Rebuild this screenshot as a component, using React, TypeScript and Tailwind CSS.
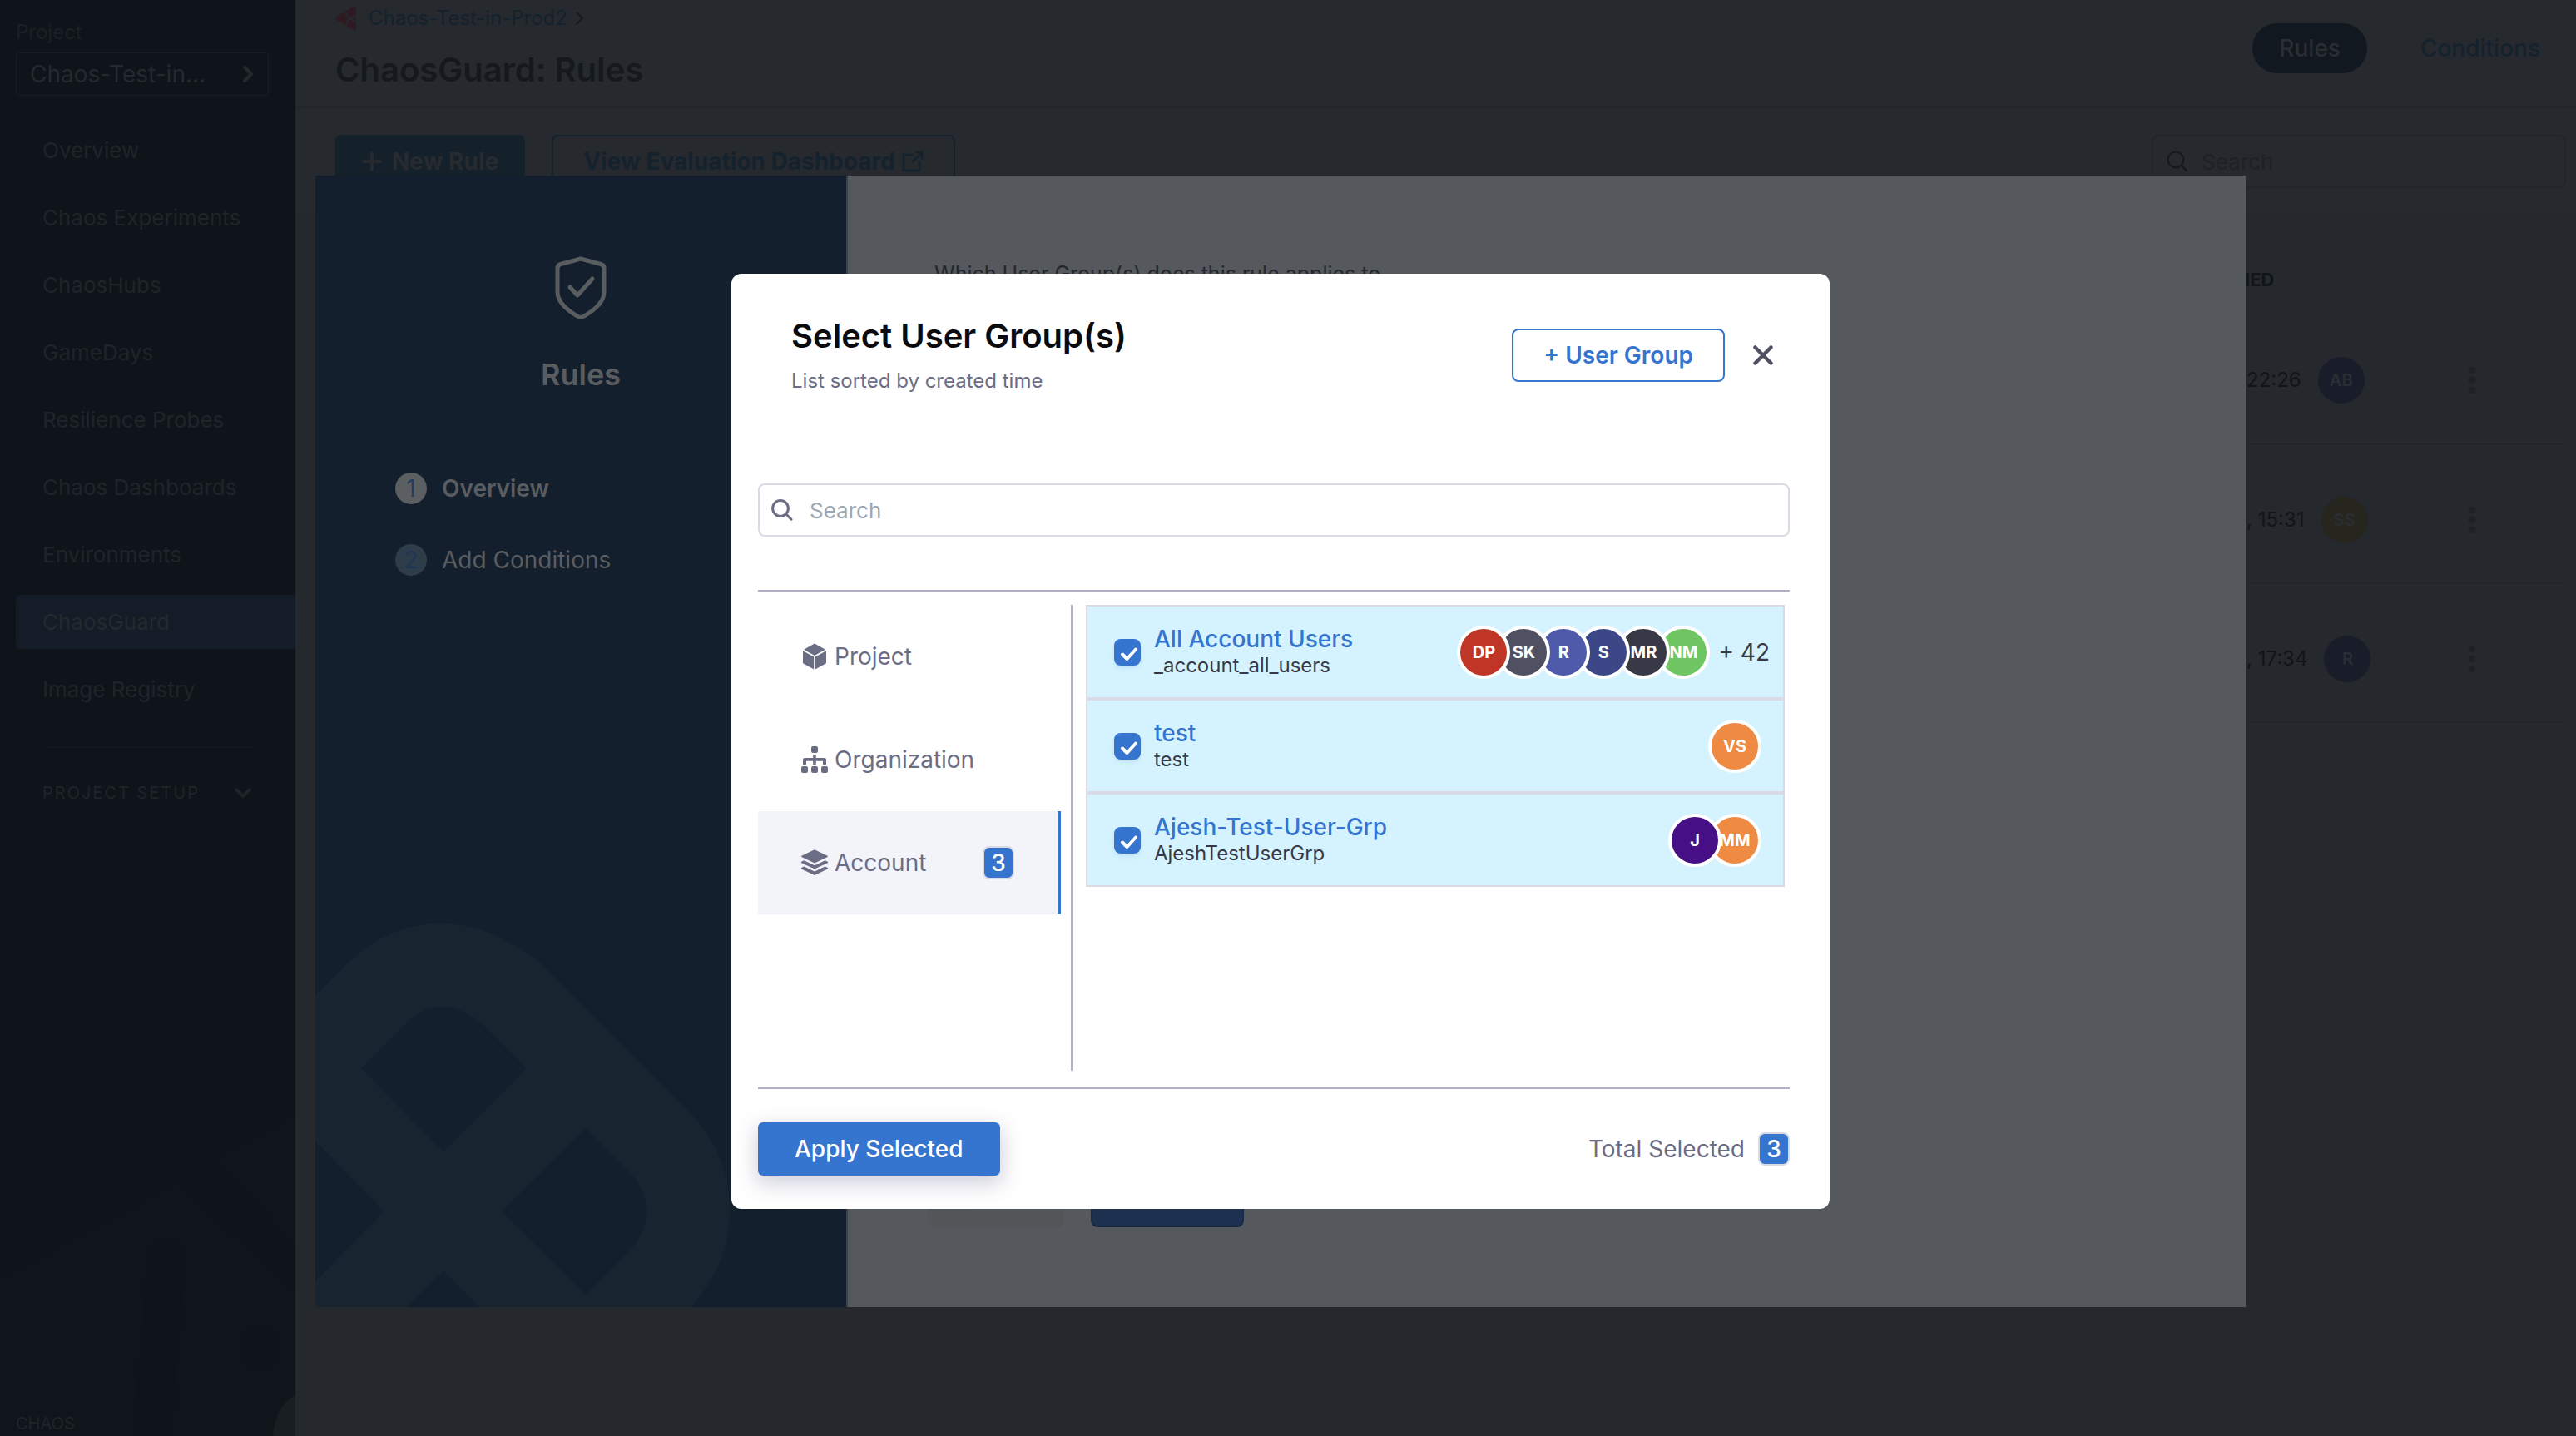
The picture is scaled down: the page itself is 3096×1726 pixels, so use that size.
import type { ReactNode } from "react";

const navItems = [
  "Overview",
  "Chaos Experiments",
  "ChaosHubs",
  "GameDays",
  "Resilience Probes",
  "Chaos Dashboards",
  "Environments",
  "ChaosGuard",
  "Image Registry",
];

const ruleRows = [
  { time: "22:26", initials: "AB", tone: "bg-[#191d2a]" },
  { time: ", 15:31", initials: "SS", tone: "bg-[#26261e]" },
  { time: ", 17:34", initials: "R", tone: "bg-[#191d2a]" },
];

type Member = { initials: string; tone: string };

const groups: { name: string; id: string; members: Member[]; more?: string }[] = [
  {
    name: "All Account Users",
    id: "_account_all_users",
    members: [
      { initials: "DP", tone: "bg-[#bf3627]" },
      { initials: "SK", tone: "bg-[#4f5162]" },
      { initials: "R", tone: "bg-[#4f5baa]" },
      { initials: "S", tone: "bg-[#3c4788]" },
      { initials: "MR", tone: "bg-[#383946]" },
      { initials: "NM", tone: "bg-[#70c563]" },
    ],
    more: "+ 42",
  },
  { name: "test", id: "test", members: [{ initials: "VS", tone: "bg-[#ee8a41]" }] },
  {
    name: "Ajesh-Test-User-Grp",
    id: "AjeshTestUserGrp",
    members: [
      { initials: "J", tone: "bg-[#470f85]" },
      { initials: "MM", tone: "bg-[#ee8a41]" },
    ],
  },
];

function CubeIcon() {
  return (
    <svg viewBox="0 0 32 32" className="size-8 shrink-0" fill="currentColor" aria-hidden="true">
      <path d="M16 0.5 29 7.8 16 15 3 7.8Z" />
      <path d="M2 9.3 15.2 16.6V31.5L2 24.2Z" />
      <path d="M30 9.3 16.8 16.6V31.5L30 24.2Z" />
    </svg>
  );
}

function SitemapIcon() {
  return (
    <svg viewBox="0 0 32 32" className="size-8 shrink-0" fill="currentColor" aria-hidden="true">
      <rect x="12" y="0" width="8" height="8" rx="2" />
      <rect x="0" y="24" width="8" height="8" rx="2" />
      <rect x="12" y="24" width="8" height="8" rx="2" />
      <rect x="24" y="24" width="8" height="8" rx="2" />
      <path d="M14.2 10h3.6v4H28a2 2 0 0 1 2 2v6h-4v-4.2h-8.2V22h-3.6v-4.2H6V22H2v-6a2 2 0 0 1 2-2h10.2Z" />
    </svg>
  );
}

function LayersIcon() {
  return (
    <svg viewBox="0 0 32 32" className="size-8 shrink-0" fill="currentColor" aria-hidden="true">
      <path d="M14.9 0.8a2.6 2.6 0 0 1 2.2 0L31.2 7.4a1 1 0 0 1 0 1.9L17.1 15.9a2.6 2.6 0 0 1-2.2 0L0.8 9.3a1 1 0 0 1 0-1.9Z" />
      <path d="M0.8 14.4 3.4 13.2 14.9 18.7a2.6 2.6 0 0 0 2.2 0L28.6 13.2 31.2 14.4a1 1 0 0 1 0 2L17.1 23a2.6 2.6 0 0 1-2.2 0L0.8 16.4a1 1 0 0 1 0-2Z" />
      <path d="M0.8 21.8 3.4 20.6 14.9 26a2.6 2.6 0 0 0 2.2 0L28.6 20.6 31.2 21.8a1 1 0 0 1 0 2L17.1 30.6a2.6 2.6 0 0 1-2.2 0L0.8 23.8a1 1 0 0 1 0-2Z" />
    </svg>
  );
}

const scopes: { label: string; icon: ReactNode; count?: number }[] = [
  { label: "Project", icon: <CubeIcon /> },
  { label: "Organization", icon: <SitemapIcon /> },
  { label: "Account", icon: <LayersIcon />, count: 3 },
];

function SearchIcon({ className, strokeWidth }: { className: string; strokeWidth: number }) {
  return (
    <svg viewBox="0 0 26 26" className={className} fill="none" stroke="currentColor" strokeWidth={strokeWidth} strokeLinecap="round" aria-hidden="true">
      <circle cx="11" cy="11" r="9.4" />
      <path d="M17.8 17.8 24 24.2" />
    </svg>
  );
}

function Sidebar() {
  return (
    <aside className="relative flex w-[355px] shrink-0 flex-col overflow-hidden bg-[#0f141b] pl-[19px] text-[#1f2428]">
      <svg viewBox="0 0 355 400" className="absolute bottom-0 left-0 w-full" aria-hidden="true">
        <path d="M355 12 255 68 355 174Z" fill="#10151b" />
        <path d="M0 209 213 94 355 224V400H0Z" fill="#10151b" />
        <path d="M192 168q30-2 31 24l-18 208h-45l18-208q2-22 14-24Z" fill="#0f141a" />
        <circle cx="312" cy="295" r="24" fill="#0f141a" />
        <path d="M355 350Q330 366 328 400H355Z" fill="#191e22" />
      </svg>
      <div className="relative mt-[23px] text-2xl text-[#1b2024]">Project</div>
      <button type="button" className="relative mt-2 mr-8 flex h-[52px] items-center justify-between rounded-sm border border-[#191e23] pr-[17px] pl-4 text-[28px] text-[#25292d]">
        Chaos-Test-in...
        <svg viewBox="0 0 14 22" className="h-[22px] w-3.5" fill="none" stroke="currentColor" strokeWidth="4" strokeLinecap="round" strokeLinejoin="round" aria-hidden="true">
          <path d="m3 3 8 8-8 8" />
        </svg>
      </button>
      <nav className="relative mt-[33px] flex flex-col gap-4">
        {navItems.map((item) => (
          <a
            key={item}
            href="#"
            className={
              item === "ChaosGuard"
                ? "flex h-[65px] items-center rounded-l-md bg-[#141c27] pl-8 text-[26px] text-[#24292d]"
                : "flex h-[65px] items-center pl-8 text-[26px]"
            }
          >
            {item}
          </a>
        ))}
      </nav>
      <hr className="relative mt-9 mr-12 ml-8 border-t-2 border-[#12171b]" />
      <button type="button" className="relative mt-[38px] mr-[52px] ml-8 flex items-center justify-between text-xl leading-8 tracking-widest">
        PROJECT SETUP
        <svg viewBox="0 0 22 14" className="h-3.5 w-[22px]" fill="none" stroke="currentColor" strokeWidth="4" strokeLinecap="round" strokeLinejoin="round" aria-hidden="true">
          <path d="m3 3 8 8 8-8" />
        </svg>
      </button>
      <div className="relative mt-auto pb-[3px] text-xl leading-6">CHAOS</div>
    </aside>
  );
}

function RulesPage() {
  return (
    <main className="flex min-w-0 flex-1 flex-col bg-[#25282c]">
      <header className="flex h-[130px] items-start justify-between border-b-2 border-[#23262a] bg-[#26292d] pr-[11px] pl-12">
        <div>
          <div className="mt-1.5 flex h-8 items-center text-2xl text-[#14222e]">
            <svg viewBox="0 0 26 30" className="mr-3.5 h-[30px] w-[26px] text-[#301a22]" aria-hidden="true">
              <path d="M1 13.500 22 1q3-1.500 3 2v24q0 3.500-3 2L1 16.500q-1.500-1.500 0-3Z" fill="currentColor" />
              <path d="M12 7.500 16 14M14 22l2-8M26 12l-9 3M14 21l3-6M17 15l9 5" stroke="#26292d" strokeWidth="2" fill="none" />
            </svg>
            <a href="#">Chaos-Test-in-Prod2</a>
            <svg viewBox="0 0 10 16" className="ml-2.5 h-4 w-2.5" fill="none" stroke="#15191d" strokeWidth="2" aria-hidden="true">
              <path d="m1 1 7 7-7 7" />
            </svg>
          </div>
          <h1 className="mt-[22px] text-[40px] leading-[48px] font-semibold text-[#15181c]">ChaosGuard: Rules</h1>
        </div>
        <div className="mt-7 flex gap-8 text-[28px] font-medium">
          <button type="button" className="h-[60px] rounded-full bg-[#111820] px-8 text-[#2a2d31]">Rules</button>
          <button type="button" className="h-[60px] px-8 text-[#14222e]">Conditions</button>
        </div>
      </header>

      <div className="flex h-32 items-start justify-between bg-[#26292d] pt-8 pr-3 pl-12">
        <div className="flex gap-8 text-[28px] font-bold">
          <button type="button" className="flex h-16 items-center gap-3 rounded-lg bg-[#14202a] px-8 text-[#272b2f]">
            <svg viewBox="0 0 24 24" className="size-6" stroke="currentColor" strokeWidth="3.500" strokeLinecap="round" aria-hidden="true">
              <path d="M12 2v20M2 12h20" />
            </svg>
            New Rule
          </button>
          <button type="button" className="flex h-16 items-center gap-2 rounded-lg border-2 border-[#14222e] px-9 text-[#14222e]">
            View Evaluation Dashboard
            <svg viewBox="0 0 26 26" className="size-[26px]" fill="none" stroke="currentColor" strokeWidth="2.500" aria-hidden="true">
              <path d="M14 5H2v19h19V12M16 2h8v8M24 2 12 14" />
            </svg>
          </button>
        </div>
        <label className="flex h-16 w-[498px] items-center gap-4 rounded-lg border-2 border-[#232629] pl-4 text-[#14171b]">
          <SearchIcon className="size-[26px] shrink-0" strokeWidth={2} />
          <input type="text" aria-label="Search rules" placeholder="Search" className="h-full min-w-0 flex-1 bg-transparent text-[26px] outline-none placeholder:text-[#1e2125]" />
        </label>
      </div>

      <div className="pr-3 pl-12">
        <table className="w-full table-fixed text-left">
          <colgroup>
            <col />
            <col className="w-[388px]" />
            <col className="w-[117px]" />
          </colgroup>
          <thead>
            <tr className="h-[109px]">
              <th />
              <th className="pt-12 pl-[119px] text-[22px] font-bold text-[#111418]">IED</th>
              <th />
            </tr>
          </thead>
          <tbody>
            {ruleRows.map((row) => (
              <tr key={row.initials} className="h-[167px] border-b-2 border-[#232629]">
                <td />
                <td className="pt-3.5 pl-[121px]">
                  <div className="flex items-center gap-5">
                    <time className="text-2xl text-[#111418]">{row.time}</time>
                    <span className={`${row.tone} flex size-14 items-center justify-center rounded-full text-xl font-semibold text-[#2a2e34]`}>
                      {row.initials}
                    </span>
                  </div>
                </td>
                <td className="pt-3.5">
                  <button type="button" aria-label="Rule options" className="flex flex-col gap-1 text-[#1e2125]">
                    <span className="size-2 rounded-full bg-current" />
                    <span className="size-2 rounded-full bg-current" />
                    <span className="size-2 rounded-full bg-current" />
                  </button>
                </td>
              </tr>
            ))}
          </tbody>
        </table>
      </div>
    </main>
  );
}

function RuleWizard() {
  return (
    <div className="fixed inset-0 flex items-center justify-center pt-14 pr-[18px]">
      <section className="flex h-[1360px] w-[2320px] bg-[#55585c]">
        <div className="relative w-[640px] shrink-0 overflow-hidden border-r-2 border-[#3b4146] bg-[#141f2e] text-[#5a5d60]">
          <svg viewBox="379 1091 638 480" className="absolute bottom-0 left-0 w-full" aria-hidden="true">
            <path
              fill="#192431"
              fillRule="evenodd"
              d="M379 1197 421 1155Q470 1110 530 1110T652 1160L830 1338Q877 1388 877 1455 877 1520 830 1571H379ZM434 1284 533 1385 633 1284 583 1234Q558 1210 530 1210 504 1210 484 1234ZM603 1456 704 1556 754 1506Q777 1482 777 1455 777 1430 758 1411L704 1356ZM379 1372V1540L462 1456ZM533 1527 489 1571H577Z"
            />
          </svg>
          <div className="relative flex flex-col items-center pt-[97px]">
            <svg viewBox="0 0 62 76" className="h-[76px] w-[62px]" fill="none" stroke="currentColor" strokeWidth="5" strokeLinecap="round" strokeLinejoin="round" aria-hidden="true">
              <path d="M31 3 55 9.500q4 1 4 5V43Q59 58 35 72q-4 2.500-8 0Q3 58 3 43V14.500q0-4 4-5Z" />
              <path d="m18 37 9 10 18-20" />
            </svg>
            <h2 className="mt-10 text-4xl leading-[52px] font-semibold">Rules</h2>
          </div>
          <ol className="relative mt-[92px] ml-24 flex flex-col gap-12 text-[28px] leading-[38px]">
            <li className="flex items-center gap-[18px] font-semibold">
              <span className="flex size-[38px] items-center justify-center rounded-full bg-[#5c5f62] font-normal text-[#223d5f]">1</span>
              Overview
            </li>
            <li className="flex items-center gap-[18px]">
              <span className="flex size-[38px] items-center justify-center rounded-full bg-[#2f3d4b] text-[#1f3557]">2</span>
              Add Conditions
            </li>
          </ol>
        </div>
        <div className="flex flex-1 flex-col justify-between pt-[100px] pb-24 pl-[104px]">
          <p className="text-[25px] leading-9 text-[#23272e]">Which User Group(s) does this rule applies to</p>
          <div className="-ml-2 flex gap-8">
            <button type="button" aria-label="Previous step" className="h-16 w-[164px] rounded-lg bg-[#535659]" />
            <button type="button" aria-label="Next step" className="h-16 w-[184px] rounded-lg border-2 border-[#1a2a42] bg-[#1e3050]" />
          </div>
        </div>
      </section>
    </div>
  );
}

function Count({ value }: { value: number }) {
  return (
    <span className="flex h-10 w-[38px] items-center justify-center rounded-lg border-2 border-[#d9dae5] bg-[#3574cf] text-[28px] font-medium text-white">
      {value}
    </span>
  );
}

function GroupRow({ group }: { group: (typeof groups)[number] }) {
  return (
    <li className="flex h-[113px] items-center border-2 border-[#d9dae5] bg-[#d4f3fe] pl-8">
      <label className="flex flex-1 items-center gap-4">
        <span className="relative size-8 shrink-0">
          <input type="checkbox" defaultChecked className="size-8 appearance-none rounded-lg bg-[#3574cf] shadow-md shadow-[#3574cf]/10" />
          <svg viewBox="0 0 32 32" className="pointer-events-none absolute inset-0 size-8" fill="none" stroke="white" strokeWidth="4" strokeLinecap="round" strokeLinejoin="round" aria-hidden="true">
            <path d="m10 18.500 5.500 5.500L26 12.500" />
          </svg>
        </span>
        <span className="flex flex-col">
          <span className="text-[28px] leading-8 font-medium text-[#3574cf]">{group.name}</span>
          <span className="text-2xl leading-8 text-[#383946]">{group.id}</span>
        </span>
      </label>
      <div className="flex">
        {group.members.map((member, index) => (
          <span
            key={member.initials}
            style={{ zIndex: group.members.length - index }}
            className={`${member.tone} relative -ml-4 flex size-16 items-center justify-center rounded-full border-4 border-white text-xl font-bold text-white`}
          >
            {member.initials}
          </span>
        ))}
      </div>
      {group.more ? (
        <span className="mr-4 ml-2.5 text-[28px] text-[#383946]">{group.more}</span>
      ) : (
        <span className="w-[26px]" />
      )}
    </li>
  );
}

function UserGroupDialog() {
  return (
    <div className="fixed inset-0 z-10 flex items-center justify-center pt-14 pr-[18px]">
      <section role="dialog" aria-modal="true" aria-labelledby="dialog-title" className="w-[1320px] rounded-xl bg-white pt-[51px] pr-12 pb-10 pl-8">
        <div className="flex items-center pr-5 pl-10">
          <div className="flex-1">
            <h2 id="dialog-title" className="text-[40px] leading-[48px] font-semibold text-[#0b0b0d]">Select User Group(s)</h2>
            <p className="mt-3.5 text-2xl text-[#6b6d85]">List sorted by created time</p>
          </div>
          <button type="button" className="h-16 rounded-lg border-2 border-[#3574cf] px-9 text-[28px] font-semibold text-[#3574cf]">+ User Group</button>
          <button type="button" aria-label="Close" className="ml-[34px] text-[#4f5162]">
            <svg viewBox="0 0 24 24" className="size-6" stroke="currentColor" strokeWidth="4.500" strokeLinecap="round" aria-hidden="true">
              <path d="m2.500 2.500 19 19m0-19-19 19" />
            </svg>
          </button>
        </div>

        <label className="mt-[107px] flex h-16 items-center gap-5 rounded-lg border-2 border-[#d9dae5] pl-3.5 text-[#6b6d85]">
          <SearchIcon className="size-[26px] shrink-0" strokeWidth={3} />
          <input type="text" aria-label="Search user groups" placeholder="Search" className="h-full min-w-0 flex-1 bg-transparent text-[26px] outline-none placeholder:text-[#9ca7b3]" />
        </label>

        <div className="mt-16 flex h-[600px] border-y-2 border-[#b0b1c4] pt-4 pb-5 pr-1.5">
          <div className="flex w-[364px] shrink-0 flex-col">
            {scopes.map((scope) => (
              <button
                key={scope.label}
                type="button"
                className={
                  scope.count
                    ? "flex h-[124px] items-center gap-2 border-r-4 border-[#3574cf] bg-[#f3f3fa] pr-[52px] pl-[52px] text-[28px] text-[#6b6d85]"
                    : "flex h-[124px] items-center gap-2 pl-[52px] text-[28px] text-[#6b6d85]"
                }
              >
                {scope.icon}
                <span className="flex-1 text-left">{scope.label}</span>
                {scope.count ? <Count value={scope.count} /> : null}
              </button>
            ))}
          </div>
          <div className="ml-3 w-0.5 bg-[#b0b1c4]" />
          <ul className="ml-4 flex-1">
            {groups.map((group) => (
              <GroupRow key={group.id} group={group} />
            ))}
          </ul>
        </div>

        <div className="flex items-center justify-between pt-10">
          <button type="button" className="h-16 rounded-md bg-[#3574cf] px-11 text-[28px] font-medium text-white shadow-[0_8px_24px_2px_rgba(96,97,140,0.3)]">
            Apply Selected
          </button>
          <div className="flex items-center gap-4 text-[28px] text-[#6b6d85]">
            Total Selected
            <Count value={3} />
          </div>
        </div>
      </section>
    </div>
  );
}

export default function App() {
  return (
    <div className="flex h-screen overflow-hidden bg-[#25282c] font-['Inter',sans-serif]">
      <Sidebar />
      <RulesPage />
      <RuleWizard />
      <UserGroupDialog />
    </div>
  );
}
